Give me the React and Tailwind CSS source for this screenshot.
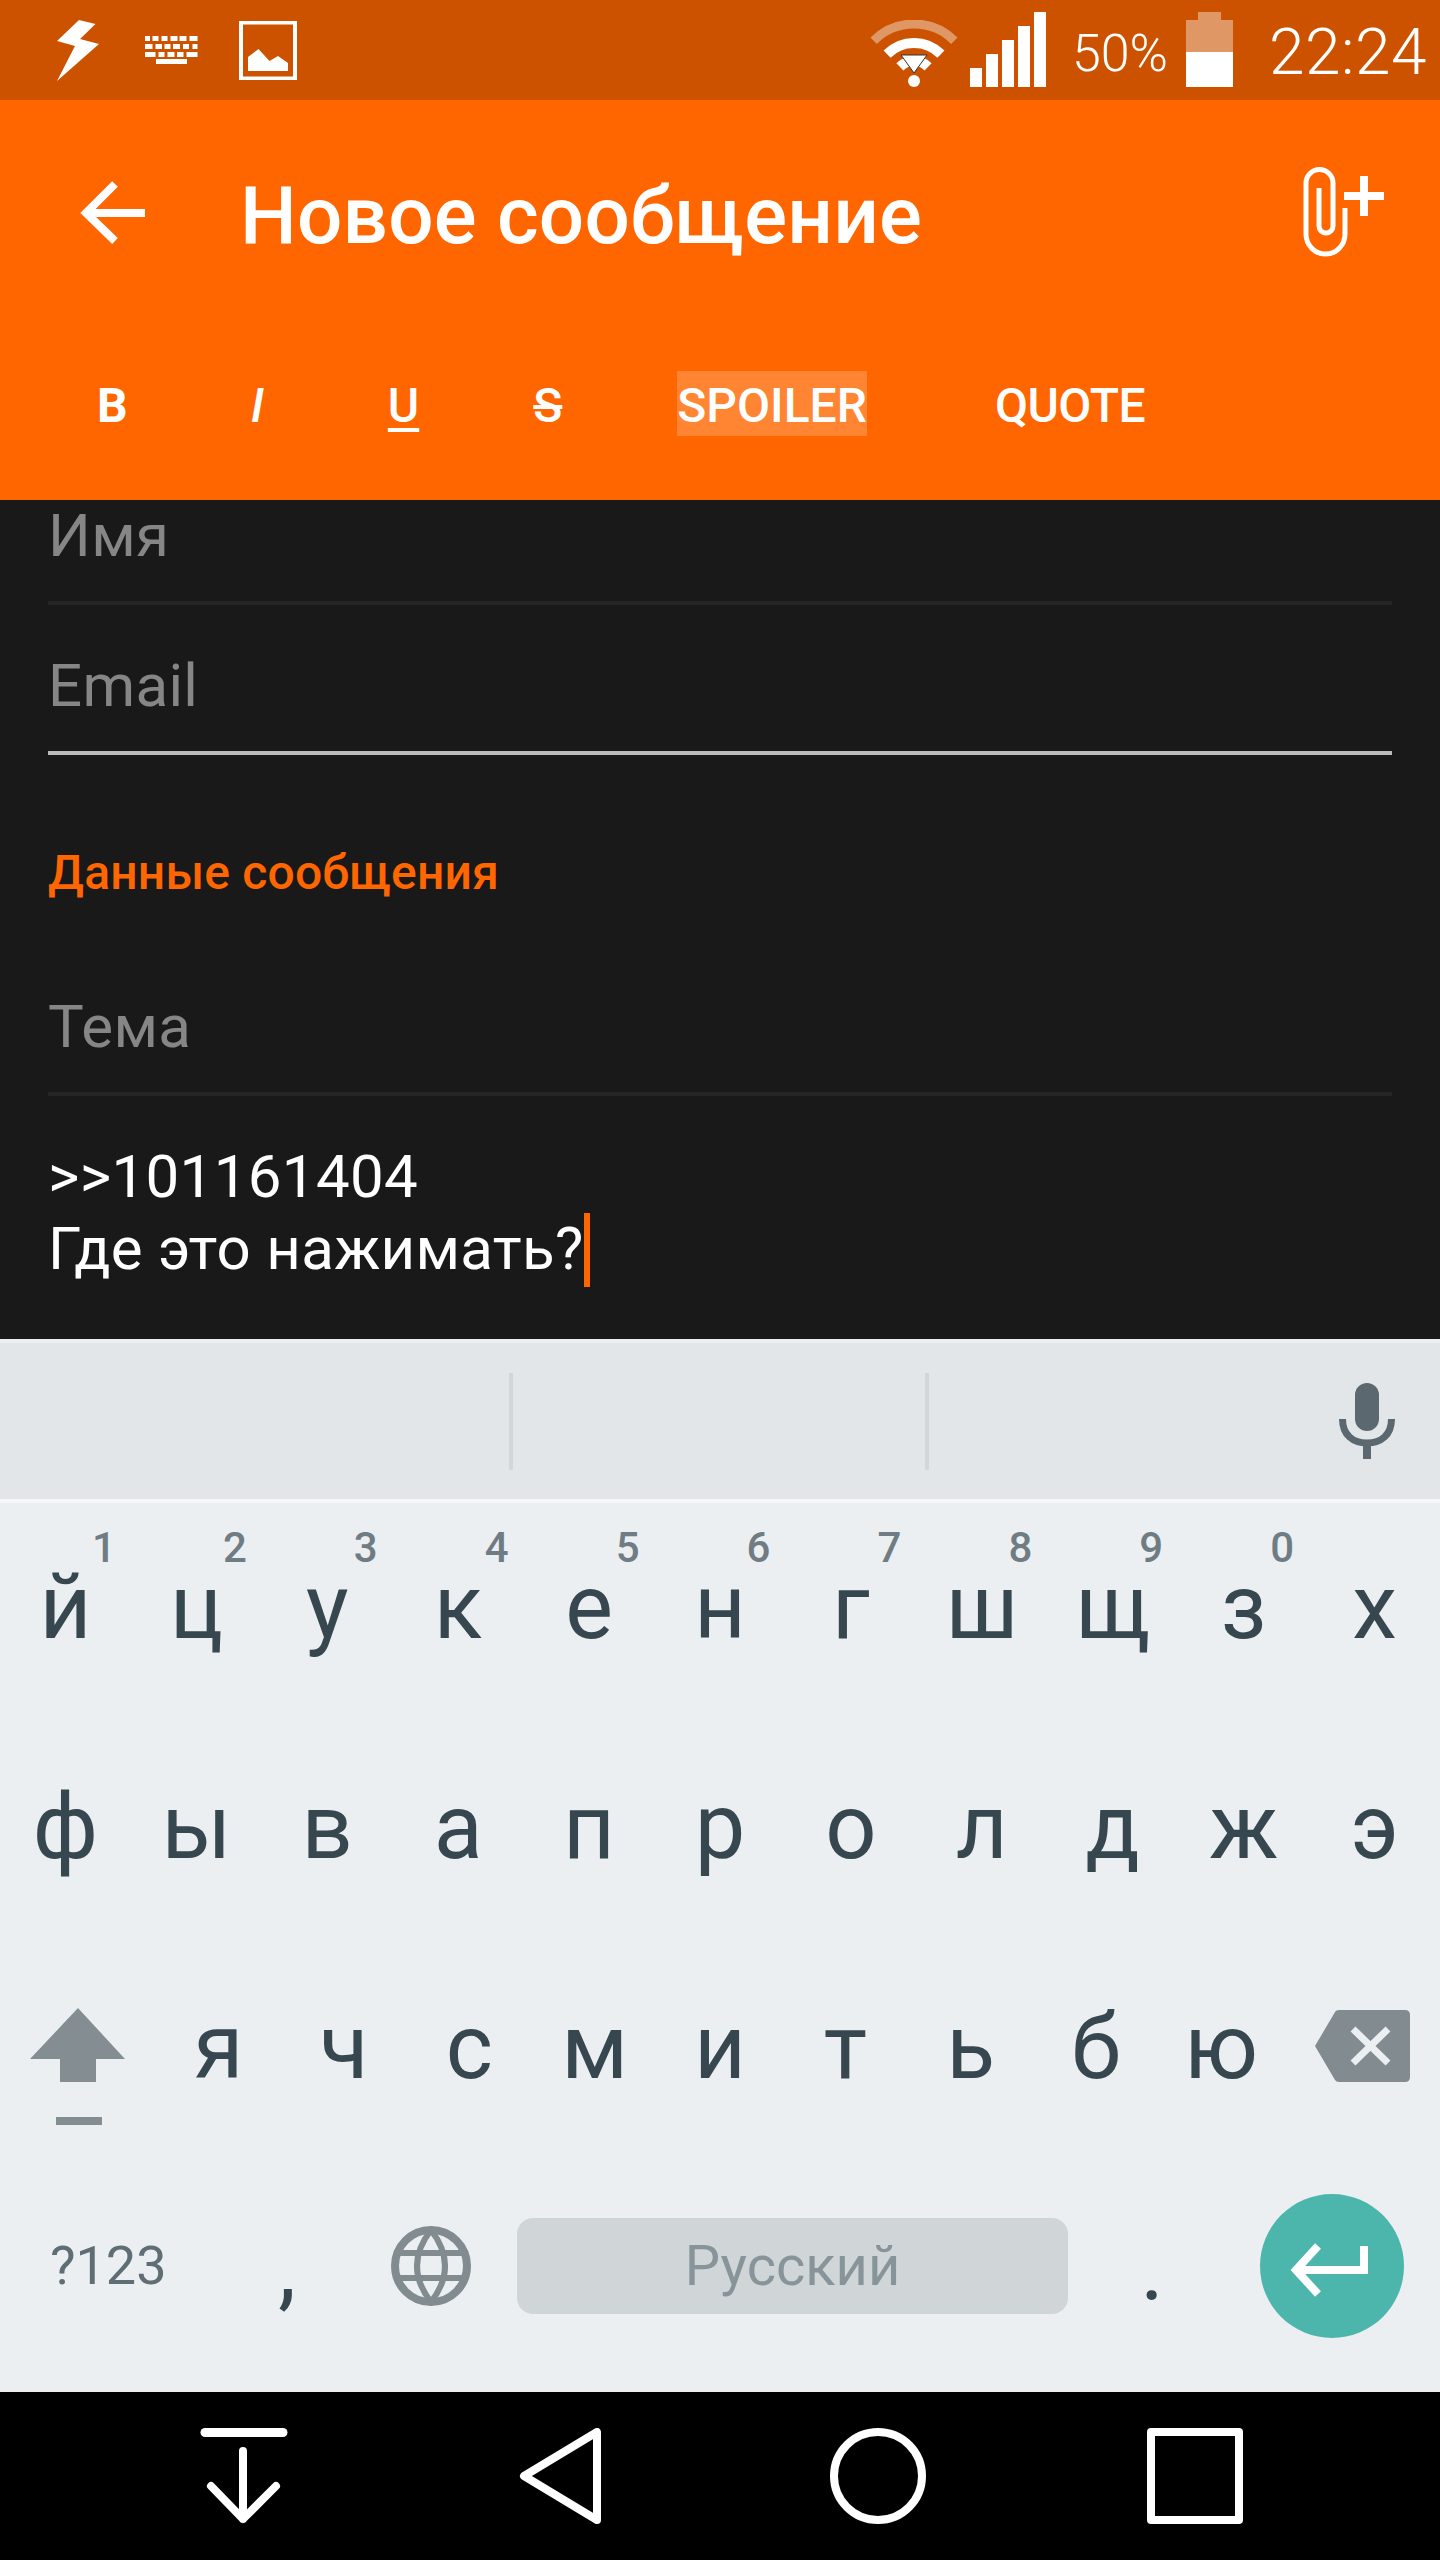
import React from 'react';

const row1 = [['й', '1'], ['ц', '2'], ['у', '3'], ['к', '4'], ['е', '5'], ['н', '6'], ['г', '7'], ['ш', '8'], ['щ', '9'], ['з', '0'], ['х', '']];
const row2 = ['ф', 'ы', 'в', 'а', 'п', 'р', 'о', 'л', 'д', 'ж', 'э'];
const row3 = ['я', 'ч', 'с', 'м', 'и', 'т', 'ь', 'б', 'ю'];

const kbRows = [
  [145.5, 5, [[0, 5], [7.5, 6], [16.5, 6], [25.5, 7], [34.5, 7], [44.5, 8]], 36],
  [145.5, 5, [[0, 7.5], [10.5, 6.5], [19.5, 6], [28, 7], [38, 6], [47.5, 5]], 44],
  [145.5, 5, [[0, 10.5], [13.5, 6], [22.5, 7], [32, 6.5], [41.5, 11]], 52],
];

const StatusIcons = () => (
  <>
    <svg width="43" height="61" viewBox="0 0 43 61" className="ml-[57px] mt-[20px]">
      <polygon points="22,0 38.5,4 23,19 42,24 0,61 18,26 0,21" fill="#fff" />
    </svg>
    <svg width="54" height="28" viewBox="0 0 54 28" className="ml-[45px] mt-[36px]">
      {kbRows.map((r) =>
        r[2].map(([x, w]) => <rect key={`${r[3]}-${x}`} x={x} y={r[3] - 36} width={w} height={r[1]} fill="#fff" />)
      )}
      <rect x="11" y="23" width="31" height="5" fill="#fff" />
    </svg>
    <svg width="58" height="59" viewBox="0 0 58 59" className="ml-[40px] mt-[21px]">
      <rect x="2" y="1.5" width="54" height="56" fill="none" stroke="#fff" strokeWidth="4" />
      <polygon points="9,36 19.5,28 30.5,40 39,35 49,42 49,50 9,50" fill="#fff" />
    </svg>
  </>
);

const Wifi = () => (
  <svg width="88" height="67" viewBox="0 0 88 67" className="mt-[20px]">
    <path d="M3.7 20.7A57 57 0 0 1 84.3 20.7" fill="none" stroke="#e09766" strokeWidth="9" />
    <path d="M17.1 34.1A38 38 0 0 1 70.9 34.1" fill="none" stroke="#fff" strokeWidth="10" />
    <path d="M29.9 46.9A20 20 0 0 1 58.1 46.9" fill="none" stroke="#fff" strokeWidth="10" />
    <polygon points="31,35 57,35 44,53" fill="#fff" stroke="#333" strokeWidth="1" />
    <circle cx="44" cy="61" r="6" fill="#fff" />
  </svg>
);

const Signal = () => (
  <div className="ml-[12px] mt-[12px] flex h-[75px] items-end gap-[4px]">
    <div className="h-[19px] w-[12px] bg-white" />
    <div className="h-[33px] w-[12px] bg-white" />
    <div className="h-[47px] w-[12px] bg-white" />
    <div className="h-[61px] w-[12px] bg-white" />
    <div className="h-[75px] w-[12px] bg-white" />
  </div>
);

const Battery = () => (
  <svg width="47" height="75" viewBox="0 0 47 75" className="ml-[18px] mt-[12px]">
    <rect x="12" y="0" width="23" height="8" fill="#e09766" />
    <rect x="0" y="8" width="47" height="32" fill="#e09766" />
    <rect x="0" y="40" width="47" height="35" fill="#fff" />
  </svg>
);

const AttachIcon = () => (
  <svg width="90" height="95" viewBox="0 0 90 95" className="ml-auto mr-[50px] -mt-[6px]">
    <path d="M45 43V69A19.5 20 0 0 1 6 69V18A13.5 13.5 0 0 1 33 18V61A7 7 0 0 1 19 61V23" fill="none" stroke="#fff" strokeWidth="5" />
    <path d="M64 11V51M44 31H84" fill="none" stroke="#fff" strokeWidth="8" />
  </svg>
);

const Field = ({ label, className }) => (
  <div className={`pb-[29px] text-[60px] leading-[72px] tracking-[0.35px] text-[#868686] ${className}`}>{label}</div>
);

const Key = ({ label, hint }) => (
  <div className="relative flex-1 text-center text-[90px] leading-[210px] text-[#37474f]">
    {label}
    {hint && <span className="absolute right-[15px] top-[24px] text-[42px] font-medium leading-[42px] text-[#6f7c83]">{hint}</span>}
  </div>
);

export default function App() {
  return (
    <div className="flex h-[2560px] w-[1440px] flex-col overflow-hidden bg-black font-['Roboto',sans-serif]">
      {/* status bar */}
      <div className="flex h-[100px] shrink-0 items-start bg-[#cc5200] text-white">
        <StatusIcons />
        <div className="ml-auto flex items-start pr-[13px]">
          <Wifi />
          <Signal />
          <span className="ml-[26px] mt-[24px] text-[52px] font-light leading-[60px]">50%</span>
          <Battery />
          <span className="ml-[36px] mt-[15px] text-[64px] font-light leading-[76px] tracking-[0.5px]">22:24</span>
        </div>
      </div>

      {/* toolbar */}
      <div className="h-[400px] shrink-0 bg-[#ff6600] text-white">
        <div className="flex h-[231px] items-center">
          <svg width="65" height="63" viewBox="0 0 65 63" className="ml-[80px] -mt-[7px]">
            <path d="M65 32H6M35 3L6 32L35 60" fill="none" stroke="#fff" strokeWidth="8" />
          </svg>
          <span className="ml-[95px] text-[80px] font-medium leading-[96px] tracking-[0.2px]">Новое сообщение</span>
          <AttachIcon />
        </div>
        <div className="flex pt-[40px] text-[48px] font-medium">
          <span className="ml-[97px] h-[65px] font-bold leading-[69px]">B</span>
          <span className="ml-[123px] h-[65px] italic leading-[69px]">I</span>
          <span className="ml-[124px] h-[65px] leading-[69px] underline underline-offset-[6px]">U</span>
          <span className="ml-[114px] h-[65px] leading-[69px] line-through">S</span>
          <span className="ml-[115px] h-[65px] bg-[#ff8533] leading-[69px]">SPOILER</span>
          <span className="ml-[128px] h-[65px] leading-[69px] tracking-[-0.5px]">QUOTE</span>
        </div>
      </div>

      {/* form */}
      <div className="h-[839px] shrink-0 bg-[#191919] px-[48px]">
        <Field label="Имя" className="border-b-4 border-[#252525]" />
        <Field label="Email" className="mt-[45px] border-b-4 border-[#bbbbbb]" />
        <div className="mt-[89px] text-[48px] font-medium leading-[58px] tracking-[0.2px] text-[#ff6600]">Данные сообщения</div>
        <Field label="Тема" className="mt-[89px] border-b-4 border-[#252525]" />
        <div className="mt-[45px] text-[60px] leading-[72px] tracking-[0.35px] text-white">
          <div>&gt;&gt;101161404</div>
          <div>
            Где это нажимать?
            <span className="inline-block h-[74px] w-[6px] bg-[#ff6600] align-[-18px]" />
          </div>
        </div>
      </div>

      {/* keyboard */}
      <div className="h-[1053px] shrink-0 bg-[#eceff1] pt-[4px]">
        <div className="flex h-[156px] items-center bg-[#e3e6e9]">
          <div className="ml-[509px] h-[97px] w-[4px] bg-[#d2d6d9]" />
          <div className="ml-[412px] h-[97px] w-[4px] bg-[#d2d6d9]" />
          <svg width="56" height="76" viewBox="0 0 56 76" className="ml-[410px]">
            <rect x="16" y="0" width="24" height="48" rx="12" fill="#5b6870" />
            <path d="M3.5 36C3.5 52 14 60 28 60C42 60 52.5 52 52.5 36" fill="none" stroke="#5b6870" strokeWidth="7" />
            <rect x="24" y="60" width="8" height="16" fill="#5b6870" />
          </svg>
        </div>
        <div className="h-[4px] bg-[#f6f7f8]" />

        <div className="flex h-[220px]">
          {row1.map(([l, h]) => <Key key={l} label={l} hint={h} />)}
        </div>
        <div className="flex h-[220px]">
          {row2.map((l) => <Key key={l} label={l} />)}
        </div>
        <div className="flex h-[220px]">
          <div className="w-[156px] pt-[65px]">
            <svg width="95" height="117" viewBox="0 0 95 117" className="ml-[30px]">
              <polygon points="48,0 95,51 66,51 66,74 30,74 30,51 0,51" fill="#848e92" />
              <rect x="26" y="109" width="46" height="8" fill="#848e92" />
            </svg>
          </div>
          <div className="flex w-[1128px]">
            {row3.map((l) => <Key key={l} label={l} />)}
          </div>
          <svg width="95" height="72" viewBox="0 0 95 72" className="ml-[31px] mt-[67px]">
            <path d="M20 2Q21 0 24 0H90Q95 0 95 5V67Q95 72 90 72H24Q21 72 20 70L0 36Z" fill="#828c90" />
            <path d="M38 19L73 53M73 19L38 53" stroke="#eceff1" strokeWidth="7" />
          </svg>
        </div>

        <div className="flex h-[206px] items-center">
          <div className="w-[217px] pl-[50px] text-[54px] leading-[64px] text-[#5f6e75]">?123</div>
          <div className="w-[140px] pt-[6px] text-center text-[90px] leading-[106px] text-[#37474f]">,</div>
          <div className="flex w-[148px] justify-center">
            <svg width="80" height="80" viewBox="0 0 80 80">
              <circle cx="40" cy="40" r="36" fill="none" stroke="#828c90" strokeWidth="8" />
              <path d="M40 4Q12 40 40 76Q68 40 40 4ZM4 27H76M4 52H76" fill="none" stroke="#828c90" strokeWidth="6" />
            </svg>
          </div>
          <div className="ml-[12px] h-[96px] w-[551px] rounded-2xl bg-[#d0d5d8] text-center text-[56px] leading-[96px] text-[#87949a]">Русский</div>
          <div className="w-[168px] pt-[6px] text-center text-[90px] leading-[106px] text-[#37474f]">.</div>
          <div className="ml-[24px] flex h-[144px] w-[144px] items-center justify-center rounded-full bg-[#4db6ac]">
            <svg width="144" height="144" viewBox="0 0 144 144">
              <path d="M104 52V76H36M58 52L36 76L58 100" fill="none" stroke="#fff" strokeWidth="8" />
            </svg>
          </div>
        </div>
      </div>

      {/* nav bar */}
      <div className="flex h-[168px] shrink-0 items-center bg-black">
        <svg width="90" height="96" viewBox="0 0 90 96" className="ml-[199px]" fill="none" stroke="#fff" strokeWidth="8" strokeLinecap="round" strokeLinejoin="round">
          <path d="M6 4.5H84" strokeWidth="9" />
          <path d="M44 23V91M12 58L44 91L77 58" />
        </svg>
        <svg width="90" height="96" viewBox="0 0 90 96" className="ml-[227px]" fill="none" stroke="#fff" strokeWidth="8" strokeLinejoin="round">
          <path d="M8 48L81 4V92Z" />
        </svg>
        <svg width="96" height="96" viewBox="0 0 96 96" className="ml-[224px]" fill="none" stroke="#fff" strokeWidth="8">
          <circle cx="48" cy="48" r="44" />
        </svg>
        <svg width="96" height="96" viewBox="0 0 96 96" className="ml-[221px]" fill="none" stroke="#fff" strokeWidth="8" strokeLinejoin="round">
          <rect x="4" y="4" width="88" height="88" />
        </svg>
      </div>
    </div>
  );
}
